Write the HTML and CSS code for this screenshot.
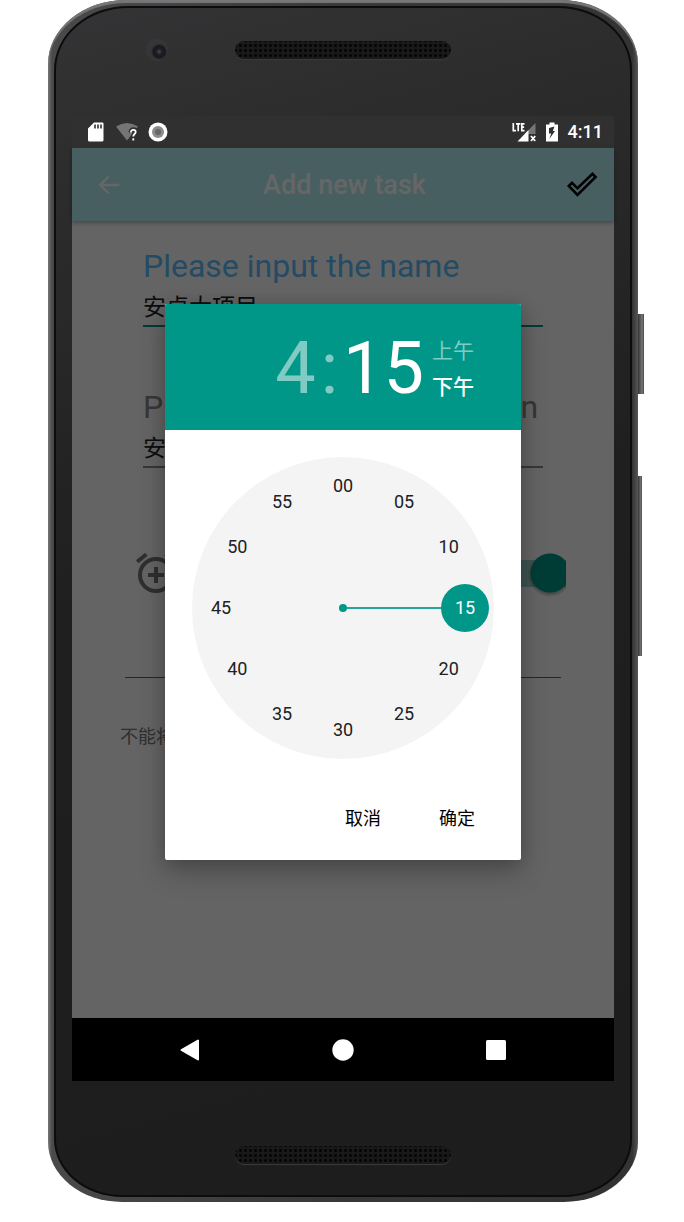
FILE: index.html
```html
<!DOCTYPE html>
<html lang="zh-CN">
<head>
<meta charset="utf-8">
<meta name="viewport" content="width=device-width, initial-scale=1">
<title>Add new task</title>
<link rel="stylesheet" href="styles.css">
</head>
<body>
<div class="stage">
<div class="phone">
  <span class="side-key power"></span>
  <span class="side-key volume"></span>
  <div class="bezel">
    <div class="bezel-top">
      <span class="camera"></span>
      <span class="speaker"></span>
    </div>

    <div class="screen">
      <div class="status-bar">
        <svg class="card-icon" width="16" height="20" viewBox="0 0 16 20"><path fill="#fff" d="M6 .5h8.500a1 1 0 0 1 1 1v16.500a1.500 1.500 0 0 1-1.500 1.500h-12.500A1.500 1.500 0 0 1 0 18V6.500z"/><path stroke="#303030" stroke-width="1.600" d="M7 2.500v4M10 2.500v4M13 2.500v4"/></svg>
        <svg width="22" height="20" viewBox="0 0 22 20"><path fill="#757575" d="M0 4.500Q11-2.500 22 4.500L11 18.500z"/><path fill="none" stroke="#303030" stroke-width="5" d="M15 10.500c0-4 5-3 5-.5 0 2-2.500 2-2.500 5v3"/><path fill="none" stroke="#fff" stroke-width="1.800" d="M14.900 10.500c0-4 4.800-3 4.800-.5 0 2-2.400 2-2.400 4.500M17.300 16.300v2.200"/></svg>
        <svg width="20" height="20" viewBox="0 0 20 20"><circle cx="10" cy="10" r="9.500" fill="#fff"/><circle cx="10" cy="10" r="6" fill="#8b8b8b"/><circle cx="10" cy="10" r="3" fill="#666"/></svg>
        <span class="spacer"></span>
        <svg width="24" height="20" viewBox="0 0 24 20"><path fill="#757575" d="M23.500 1v11H12.500z"/><path fill="#fff" d="M16.500 8v11.500H5.500z"/><path fill="none" stroke="#fff" stroke-width="1.700" d="M1.300 1v7.700H4M4 1.800h4.400M6.200 1.800v7.500M12.500 1.800H9.800v6.900h2.700M9.800 5.200h2.300"/><path stroke="#fff" stroke-width="1.800" d="M19 14l4.200 5M23.200 14L19 19"/></svg>
        <svg width="12" height="20" viewBox="0 0 12 20"><path fill="#fff" d="M3.500.5h5v2H12v17H0v-17h3.500z"/><path fill="#303030" d="M8.500 4.500L3 6v5.500h2.200L3.300 17 9 9H6.800z"/></svg>
        <time class="clock">4:11</time>
      </div>

      <div class="app">
        <header class="app-bar">
          <button class="icon-button" type="button" aria-label="Back">
            <svg width="28" height="28" viewBox="0 0 24 24"><path fill="#fff" d="M21 11H6.800l5.600-5.600L11 4l-8 8 8 8 1.400-1.400L6.800 13H21z"/></svg>
          </button>
          <h1 class="title">Add new task</h1>
          <button class="icon-button" type="button" aria-label="Save">
            <svg width="32" height="28" viewBox="0 0 32 28"><path fill="none" stroke="#000" stroke-width="2.600" d="M2.800 15L6 11.800l5.500 5.500L26.500 2.800 29.600 6 11.500 24z"/></svg>
          </button>
        </header>

        <main class="form">
          <div class="field active">
            <label for="task-name">Please input the name</label>
            <input id="task-name" type="text" value="安卓大项目">
          </div>
          <div class="field">
            <label for="task-description">Please input the description</label>
            <input id="task-description" type="text" value="安卓">
          </div>
          <div class="reminder">
            <svg width="48" height="48" viewBox="0 0 24 24"><circle cx="12" cy="13" r="8" fill="none" stroke="#757575" stroke-width="2"/><path fill="none" stroke="#757575" stroke-width="2" d="M12 9v8M8 13h8M2.600 6.400L7.200 2.600M21.400 6.400L16.800 2.600"/></svg>
            <input class="switch" type="checkbox" role="switch" aria-label="Reminder" checked>
          </div>
          <hr class="rule">
          <p class="hint">不能将</p>
        </main>

        <div class="scrim">
          <section class="picker" role="dialog" aria-label="4:15">
            <header class="picker-head">
              <button class="digits dim" type="button">4</button>
              <span class="digits colon dim">:</span>
              <button class="digits" type="button">15</button>
              <div class="periods">
                <button class="period dim" type="button">上午</button>
                <button class="period selected" type="button">下午</button>
              </div>
            </header>
            <div class="dial">
              <span class="hand"></span>
              <span class="pivot"></span>
              <button type="button" class="minute" style="--a:0deg">00</button>
              <button type="button" class="minute" style="--a:30deg">05</button>
              <button type="button" class="minute" style="--a:60deg">10</button>
              <button type="button" class="minute chosen" style="--a:90deg">15</button>
              <button type="button" class="minute" style="--a:120deg">20</button>
              <button type="button" class="minute" style="--a:150deg">25</button>
              <button type="button" class="minute" style="--a:180deg">30</button>
              <button type="button" class="minute" style="--a:210deg">35</button>
              <button type="button" class="minute" style="--a:240deg">40</button>
              <button type="button" class="minute" style="--a:270deg">45</button>
              <button type="button" class="minute" style="--a:300deg">50</button>
              <button type="button" class="minute" style="--a:330deg">55</button>
            </div>
            <footer class="actions">
              <button type="button">取消</button>
              <button type="button">确定</button>
            </footer>
          </section>
        </div>
      </div>

      <nav class="nav-bar">
        <button type="button" aria-label="Back"><svg width="22" height="24" viewBox="0 0 22 24"><path fill="#fff" stroke="#fff" stroke-width="2" stroke-linejoin="round" d="M19 2.500v19L2.500 12z"/></svg></button>
        <button type="button" aria-label="Home"><svg width="22" height="24" viewBox="0 0 22 24"><circle cx="11" cy="12" r="10.700" fill="#fff"/></svg></button>
        <button type="button" aria-label="Recent apps"><svg width="22" height="24" viewBox="0 0 22 24"><rect x="1" y="2" width="20" height="20" rx="1.500" fill="#fff"/></svg></button>
      </nav>
    </div>

    <div class="bezel-bottom"><span class="speaker"></span></div>
  </div>
</div>
</div>
</body>
</html>
```

FILE: styles.css
```css
* { box-sizing: border-box; }

body {
  margin: 0;
  background: #fff;
  font-family: Roboto, "Noto Sans CJK SC", sans-serif;
}

button {
  margin: 0;
  padding: 0;
  border: 0;
  background: none;
  color: inherit;
  font: inherit;
}

svg { display: block; }

.stage { padding: 0 46px 20px 48px; }

/* Device shell */
.phone {
  position: relative;
  padding: 6px 6px 5px;
  border-radius: 78px 78px 74px 74px / 64px 64px 60px 60px;
  background: linear-gradient(90deg, #777 0, #4a4a4a 4px, #383636 50%, #343232 99%, #555 100%);
  box-shadow: inset 0 3px 1px #777;
}

.bezel {
  padding: 0 16px;
  border: 2px solid #0c0c0c;
  border-radius: 74px 74px 68px 68px / 64px 64px 58px 58px;
  background: linear-gradient(165deg, #343436 0, #2d2d2d 12%, #1f1f1f 45%, #1d1d1e 100%);
}

.side-key {
  position: absolute;
  left: 100%;
  background: linear-gradient(90deg, #333, #777 70%, #444);
}

.power { top: 314px; width: 6px; height: 80px; }
.volume { top: 476px; width: 4px; height: 180px; }

.bezel-top {
  display: grid;
  grid-template-columns: 1fr auto 1fr;
  align-items: center;
  height: 108px;
  padding-bottom: 24px;
}

.camera {
  width: 22px;
  height: 22px;
  margin-left: 74px;
  border-radius: 50%;
  background: radial-gradient(circle at 60% 58%, #5d4246 0, #1c1d25 3px, #191a20 6px, #353537 8px, #363638 11px);
}

.speaker {
  width: 216px;
  height: 18px;
  border-radius: 9px;
  background: radial-gradient(circle, #050505 0 1px, transparent 2px) 3px 2px / 5px 5px, #191919;
  box-shadow: 0 1px 0 #3a3a3a;
}

.bezel-bottom {
  display: flex;
  justify-content: center;
  align-items: center;
  height: 114px;
  padding-top: 34px;
}

/* Status bar */
.status-bar {
  display: flex;
  align-items: center;
  gap: 10px;
  height: 32px;
  padding: 0 11px 0 16px;
  background: #303030;
}

.card-icon { margin-right: 2px; }

.spacer { flex: 1; }

.clock {
  color: #fff;
  font-size: 18px;
  font-weight: 500;
  line-height: 32px;
}

/* App */
.app {
  position: relative;
  background: #fafafa;
}

.app-bar {
  display: flex;
  align-items: center;
  justify-content: space-between;
  height: 73px;
  padding: 0 16px 0 23px;
  background: #b2edf2;
  box-shadow: 0 2px 4px rgba(0, 0, 0, 0.3);
}

.title {
  margin: 0;
  color: #fff;
  font-size: 27px;
  font-weight: 500;
  line-height: 36px;
}

.form { padding: 26px 0 268px; }

.field {
  display: flex;
  flex-direction: column;
  gap: 4px;
  margin: 0 71px 61px;
}

.field label {
  color: #8a8a8a;
  font-size: 32px;
  line-height: 38px;
  white-space: nowrap;
}

.field.active label { color: #5cbcfa; }

.field input {
  width: 100%;
  height: 38px;
  padding: 0 0 4px;
  border: 0;
  border-bottom: 2px solid #8a8a8a;
  border-radius: 0;
  outline: 0;
  background: none;
  color: #212121;
  font: 23px Roboto, "Noto Sans CJK SC", sans-serif;
}

.field.active input { border-bottom-color: #009688; }

.reminder {
  display: flex;
  align-items: center;
  justify-content: space-between;
  margin-top: 81px;
  padding: 0 48px 0 60px;
}

.switch {
  appearance: none;
  width: 64px;
  height: 48px;
  margin: 0;
  background:
    radial-gradient(circle at 48px 24px, #009688 19px, transparent 20px),
    radial-gradient(circle at 48px 26px, rgba(0, 0, 0, 0.3) 18px, transparent 22px),
    linear-gradient(#9fcfca, #9fcfca) 0 50% / 100% 27px no-repeat;
}

.rule {
  height: 1px;
  margin: 80px 53px 0;
  border: 0;
  background: #606060;
}

.hint {
  margin: 46px 48px 0;
  color: #757575;
  font-size: 18px;
  line-height: 26px;
}

/* Time picker */
.scrim {
  position: absolute;
  inset: 0;
  display: grid;
  place-items: center;
  padding-bottom: 2px;
  background: rgba(0, 0, 0, 0.6);
}

.picker {
  width: 356px;
  border-radius: 2px;
  background: #fff;
  box-shadow: 0 12px 28px rgba(0, 0, 0, 0.24), 0 2px 16px rgba(0, 0, 0, 0.14);
}

.picker-head {
  display: flex;
  align-items: center;
  justify-content: flex-end;
  height: 126px;
  padding: 4px 47px 0 0;
  border-radius: 2px 2px 0 0;
  background: #009688;
  color: #fff;
}

.digits {
  font-size: 72px;
  line-height: 84px;
}

.colon { padding: 0 5px; }

.dim { color: #80cbc4; }

.periods {
  display: flex;
  flex-direction: column;
  margin-left: 8px;
}

.period {
  font-size: 21px;
  line-height: 36px;
}

.selected { font-weight: 500; }

.dial {
  position: relative;
  width: 302px;
  height: 302px;
  margin: 27px auto 0;
  border-radius: 50%;
  background: #f4f4f4;
}

.hand {
  position: absolute;
  top: calc(50% - 1px);
  left: 50%;
  width: 100px;
  height: 2px;
  background: #26a69a;
}

.pivot {
  position: absolute;
  top: calc(50% - 4px);
  left: calc(50% - 4px);
  width: 8px;
  height: 8px;
  border-radius: 50%;
  background: #009688;
}

.minute {
  position: absolute;
  top: calc(50% - 24px - 122px * cos(var(--a)));
  left: calc(50% - 24px + 122px * sin(var(--a)));
  width: 48px;
  height: 48px;
  border-radius: 50%;
  color: #212121;
  font-size: 18px;
  line-height: 48px;
}

.chosen {
  background: #009688;
  color: #fff;
}

.actions {
  display: flex;
  justify-content: flex-end;
  gap: 22px;
  padding: 37px 28px 18px;
}

.actions button {
  width: 72px;
  color: #000;
  font-size: 18px;
  line-height: 46px;
}

/* System navigation */
.nav-bar {
  display: flex;
  align-items: center;
  justify-content: center;
  gap: 131px;
  height: 63px;
  background: #000;
}
```
